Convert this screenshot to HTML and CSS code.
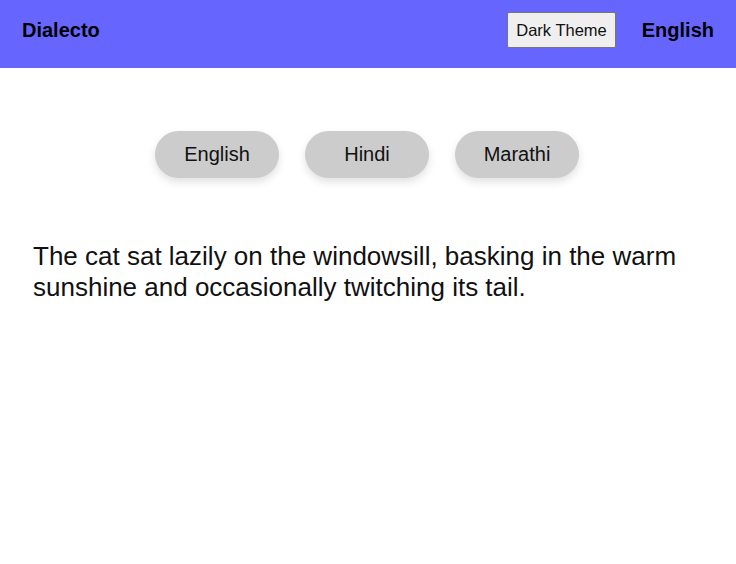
FILE: index.html
```html
<!DOCTYPE html>
<html lang="en">
<head>
<meta charset="utf-8">
<title>Dialecto</title>
<link rel="stylesheet" href="styles.css">
</head>
<body>
<header class="topbar">
  <div class="brand">Dialecto</div>
  <div class="actions">
    <button class="theme-btn">Dark Theme</button>
    <span class="current-lang">English</span>
  </div>
</header>
<main class="content">
  <div class="lang-list">
    <button class="lang-pill">English</button>
    <button class="lang-pill">Hindi</button>
    <button class="lang-pill">Marathi</button>
  </div>
  <p class="sample">The cat sat lazily on the windowsill, basking in the warm sunshine and occasionally twitching its tail.</p>
</main>
</body>
</html>
```

FILE: styles.css
```css
html, body {
  margin: 0;
  padding: 0;
  background: #ffffff;
  font-family: "Liberation Sans", Arial, sans-serif;
  color: #000;
}

.topbar {
  height: 68px;
  background: #6666ff;
  display: flex;
  align-items: center;
  justify-content: space-between;
  padding: 0 22px 8px;
  box-sizing: border-box;
}

.brand {
  font-size: 20px;
  font-weight: bold;
}

.actions {
  display: flex;
  align-items: center;
  gap: 26px;
}

.theme-btn {
  font-family: "Liberation Sans", Arial, sans-serif;
  font-size: 16.5px;
  padding: 8px;
  background: #efefef;
  border: 1px solid #767676;
  border-radius: 2px;
  color: #111;
  line-height: 18px;
}

.current-lang {
  font-size: 20px;
  font-weight: bold;
}

.content {
  padding: 63px 35px 0 33px;
}

.lang-list {
  display: flex;
  justify-content: center;
  gap: 26px;
}

.lang-pill {
  width: 124px;
  height: 47px;
  border: none;
  border-radius: 24px;
  background: #cccccc;
  font-family: "Liberation Sans", Arial, sans-serif;
  font-size: 20px;
  color: #111;
  box-shadow: 0 4px 8px rgba(0, 0, 0, 0.12);
}

.sample {
  margin: 63px 0 0;
  font-size: 26px;
  color: #111;
}
```
